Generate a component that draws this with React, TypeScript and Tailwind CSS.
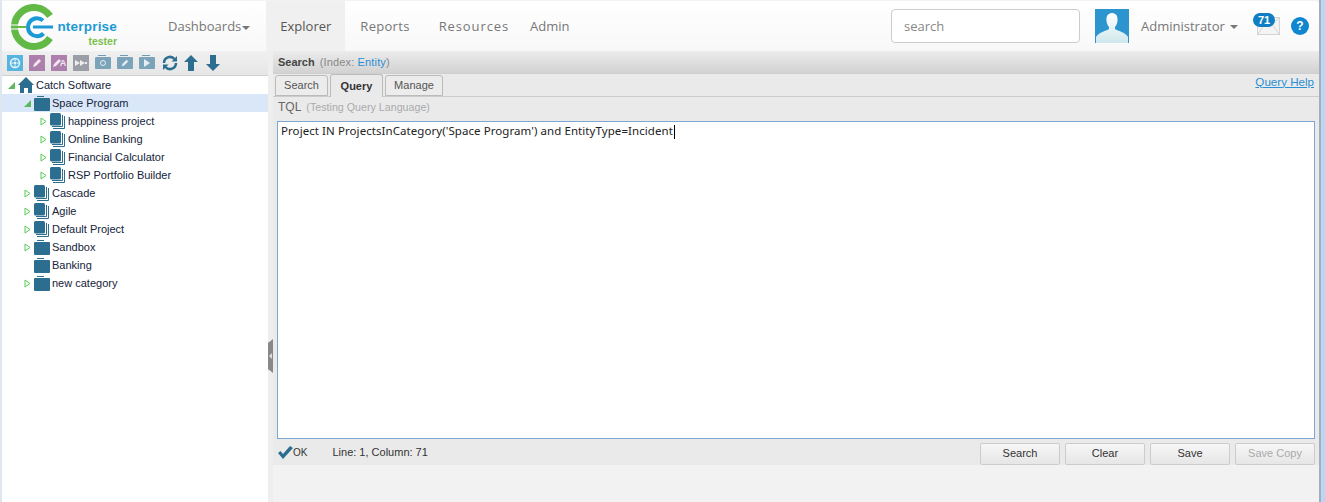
import React from "react";

const sans = "font-['Liberation_Sans',Arial,sans-serif]";
const nav = "font-['Open_Sans',sans-serif]";

function Logo() {
    return (
        <div className="ml-[9px] flex w-[143px] items-start">
            <svg width="46" height="46" viewBox="0 0 46 46" className="mt-[1px] shrink-0">
                <path d="M39 12 A19.5 19.5 0 1 0 39 34" fill="none" stroke="#63b946" strokeWidth="7" />
                <path d="M0 21 H10 M0 25 H10" stroke="#ffffff" strokeWidth="1.2" />
                <path d="M5 23 H15" stroke="#63b946" strokeWidth="2" />
                <path d="M32 16.5 A9 9 0 1 0 32.5 29.5" fill="none" stroke="#1b9ad6" strokeWidth="4" />
                <path d="M22 23 H42" stroke="#1b9ad6" strokeWidth="3" />
            </svg>
            <div className={`${sans} mt-[16px] flex w-[60px] flex-col items-end font-bold`}>
                <div className="whitespace-nowrap text-[13.5px] leading-[16px] tracking-[0.2px] text-[#1b9ad6]">nterprise</div>
                <div className="text-[10.5px] leading-[12px] text-[#7cc04b]">tester</div>
            </div>
        </div>
    );
}

function NavItem({ label, active, caret, className }: { label: string; active?: boolean; caret?: boolean; className: string }) {
    return (
        <div className={`flex h-full items-center pt-[2px] text-[13px] ${className} ${active ? "bg-[#f0f0f0] text-[#555]" : "text-[#777]"}`}>
            {label}
            {caret ? <span className="ml-[1px] mt-[2px] h-0 w-0 border-x-[4px] border-t-[4px] border-x-transparent border-t-[#777]" /> : null}
        </div>
    );
}

function Header() {
    return (
        <div className={`${nav} flex h-[50px] shrink-0 items-center rounded-tr-[4px] bg-gradient-to-b from-white to-[#f8f8f8]`}>
            <Logo />
            <div className="flex h-full items-center">
                <NavItem label="Dashboards" caret className="pl-[14px] pr-[16px]" />
                <NavItem label="Explorer" active className="px-[14px]" />
                <NavItem label="Reports" className="pl-[15px] pr-[14px] tracking-[0.3px]" />
                <NavItem label="Resources" className="pl-[15px] pr-[7px] tracking-[0.9px]" />
                <NavItem label="Admin" className="px-[14px]" />
            </div>
            <div className="ml-auto flex items-center">
                <div className="flex h-[34px] w-[189px] items-center rounded-[4px] border border-[#ccc] bg-white px-3 pt-[2px] text-[13px] text-[#888]">search</div>
                <svg width="34" height="34" viewBox="0 0 34 34" className="ml-[15px]">
                    <defs>
                        <linearGradient id="bust" x1="0" y1="0" x2="0" y2="1">
                            <stop offset="0" stopColor="#ffffff" />
                            <stop offset="1" stopColor="#cfe8ec" />
                        </linearGradient>
                    </defs>
                    <rect width="34" height="34" fill="#2c94cf" />
                    <path d="M17 4 C12.5 4 11 8 11.5 12 C11.8 15 13 17 14 18 V20 C11 22 4 23 1 28 V34 H33 V28 C30 23 23 22 20 20 V18 C21 17 22.2 15 22.5 12 C23 8 21.5 4 17 4 Z" fill="url(#bust)" />
                </svg>
                <span className="ml-[12px] mt-[2px] w-[82px] whitespace-nowrap text-[13px] text-[#777]">Administrator</span>
                <span className="ml-[7px] mt-[2px] h-0 w-0 border-x-[4px] border-t-[4px] border-x-transparent border-t-[#777]" />
                <div className="relative ml-[19px] h-[18px] w-[23px]">
                    <svg width="23" height="18" viewBox="0 0 23 18">
                        <rect x="0.5" y="0.5" width="22" height="17" fill="#f4f4f4" stroke="#d4d4d4" />
                        <path d="M1 1 L11.5 10 L22 1 M1 17 L8 7 M22 17 L15 7" fill="none" stroke="#d4d4d4" />
                    </svg>
                    <span className={`${sans} absolute -left-[4px] -top-[4px] flex h-[14px] w-[22px] items-center justify-center rounded-full bg-[#0f7fc4] text-[11px] font-bold text-white`}>71</span>
                </div>
                <span className={`${sans} ml-[11px] mr-[10px] flex h-[18px] w-[18px] items-center justify-center rounded-full bg-[#0f86d0] text-[12px] font-bold text-white`}>?</span>
            </div>
        </div>
    );
}

function ToolButton({ color, children }: { color: string; children: React.ReactNode }) {
    return <div className={`flex h-[16px] w-[16px] items-center justify-center ${color}`}>{children}</div>;
}

function Pencil() {
    return (
        <svg width="10" height="10" viewBox="0 0 10 10">
            <path d="M1 9 L2 6 L7 1 L9 3 L4 8 Z" fill="#f3e6f1" />
        </svg>
    );
}

function FolderTool({ children }: { children: React.ReactNode }) {
    return (
        <div className="flex h-[16px] w-[16px] flex-col">
            <div className="ml-[3px] h-[1px] w-[8px] bg-[#6f9bb3]" />
            <div className="mt-[1px] flex h-[12px] w-[16px] items-center justify-center rounded-[1px] bg-[#7ba3ba]">{children}</div>
        </div>
    );
}

function Toolbar() {
    return (
        <div className="flex h-[25px] shrink-0 items-center gap-[6px] border-b border-[#cfcfcf] bg-gradient-to-b from-[#f0f0f0] to-[#e6e6e6] pl-[5px]">
            <ToolButton color="bg-[#55b4e0]">
                <svg width="12" height="12" viewBox="0 0 12 12">
                    <circle cx="6" cy="6" r="4.5" fill="none" stroke="#e8f4fa" strokeWidth="1.5" />
                    <circle cx="6" cy="6" r="1.6" fill="#e8f4fa" />
                    <path d="M6 1 V4 M6 8 V11 M1 6 H4 M8 6 H11" stroke="#e8f4fa" />
                </svg>
            </ToolButton>
            <ToolButton color="bg-[#ad7fac]"><Pencil /></ToolButton>
            <ToolButton color="bg-[#ad7fac]">
                <Pencil />
                <span className={`${sans} -ml-[2px] text-[9px] font-bold leading-none text-[#f3e6f1]`}>A</span>
            </ToolButton>
            <ToolButton color="bg-[#9b9ea6]">
                <svg width="12" height="8" viewBox="0 0 12 8">
                    <path d="M0 1 L5 4 L0 7 Z M5 1 L10 4 L5 7 Z M10 3 H12 V5 H10 Z" fill="#eeeeee" />
                </svg>
            </ToolButton>
            <FolderTool>
                <span className="h-[6px] w-[6px] rounded-full border border-[#e6eef3]" />
            </FolderTool>
            <FolderTool>
                <svg width="8" height="8" viewBox="0 0 10 10"><path d="M1 9 L2 6 L7 1 L9 3 L4 8 Z" fill="#e6eef3" /></svg>
            </FolderTool>
            <FolderTool>
                <span className="h-0 w-0 border-y-[4px] border-l-[6px] border-y-transparent border-l-[#e6eef3]" />
            </FolderTool>
            <svg width="16" height="16" viewBox="0 0 16 16" className="ml-[1px]">
                <path d="M2 8 A6 6 0 0 1 12.5 4" fill="none" stroke="#2b6e90" strokeWidth="2.5" />
                <path d="M14 8 A6 6 0 0 1 3.5 12" fill="none" stroke="#2b6e90" strokeWidth="2.5" />
                <path d="M15 1 V6.5 H9.5 Z M1 15 V9.5 H6.5 Z" fill="#2b6e90" />
            </svg>
            <svg width="14" height="16" viewBox="0 0 14 16">
                <path d="M7 0 L14 7 H10 V16 H4 V7 H0 Z" fill="#2b6e90" />
            </svg>
            <svg width="14" height="16" viewBox="0 0 14 16" className="ml-[2px]">
                <path d="M7 16 L14 9 H10 V0 H4 V9 H0 Z" fill="#2b6e90" />
            </svg>
        </div>
    );
}

function Expander({ open }: { open?: boolean }) {
    if (open) {
        return (
            <svg width="7" height="7" viewBox="0 0 7 7">
                <path d="M0 7 L7 7 L7 0 Z" fill="#5cb85c" />
            </svg>
        );
    }
    return (
        <svg width="7" height="9" viewBox="0 0 7 9">
            <path d="M1 1 L6 4.5 L1 8 Z" fill="#ffffff" stroke="#55cc55" />
        </svg>
    );
}

function Folder() {
    return (
        <svg width="16" height="15" viewBox="0 0 16 15">
            <path d="M3 0.5 H10" stroke="#2b6e90" />
            <rect y="2" width="16" height="13" rx="1" fill="#2b6e90" />
        </svg>
    );
}

function Stack() {
    return (
        <svg width="15" height="16" viewBox="0 0 15 16">
            <path d="M14.5 3 V15.5 H3 M12.5 2 V13.5 H2" fill="none" stroke="#2b6e90" />
            <rect width="11" height="12.5" rx="1.5" fill="#2b6e90" />
        </svg>
    );
}

function Home() {
    return (
        <svg width="16" height="16" viewBox="0 0 16 16">
            <path d="M8 0 L16 8 H14 V16 H10 V11 H6 V16 H2 V8 H0 Z" fill="#2b6e90" />
        </svg>
    );
}

type TreeItem = { label: string; depth: number; kind: "home" | "folder" | "stack"; open?: boolean; leaf?: boolean; selected?: boolean };

const tree: TreeItem[] = [
    { label: "Catch Software", depth: 0, kind: "home", open: true },
    { label: "Space Program", depth: 1, kind: "folder", open: true, selected: true },
    { label: "happiness project", depth: 2, kind: "stack" },
    { label: "Online Banking", depth: 2, kind: "stack" },
    { label: "Financial Calculator", depth: 2, kind: "stack" },
    { label: "RSP Portfolio Builder", depth: 2, kind: "stack" },
    { label: "Cascade", depth: 1, kind: "stack" },
    { label: "Agile", depth: 1, kind: "stack" },
    { label: "Default Project", depth: 1, kind: "stack" },
    { label: "Sandbox", depth: 1, kind: "folder" },
    { label: "Banking", depth: 1, kind: "folder", leaf: true },
    { label: "new category", depth: 1, kind: "folder" },
];

const indents = ["pl-[6px]", "pl-[22px]", "pl-[38px]"];

function Tree() {
    return (
        <div className={`${sans} flex-1 bg-white text-[11px] text-[#14233a]`}>
            {tree.map((item, index) => (
                <div key={index} className={`flex h-[18px] items-center ${indents[item.depth]} ${item.selected ? "bg-[#d9e7f8]" : ""}`}>
                    <span className="flex w-[10px] shrink-0 items-center">{item.leaf ? null : <Expander open={item.open} />}</span>
                    <span className="flex w-[18px] shrink-0 items-center">
                        {item.kind === "home" ? <Home /> : item.kind === "folder" ? <Folder /> : <Stack />}
                    </span>
                    <span className="whitespace-nowrap">{item.label}</span>
                </div>
            ))}
        </div>
    );
}

function Tab({ label, width, active }: { label: string; width: string; active?: boolean }) {
    return (
        <div
            className={`flex items-center justify-center rounded-t-[3px] border border-[#bbb] text-[11px] ${width} ${
                active ? "z-10 -mb-[1px] h-[23px] border-b-0 bg-[#eaeaea] font-bold text-[#333]" : "h-[21px] bg-[#ececec] text-[#555]"
            }`}
        >
            {label}
        </div>
    );
}

function ActionButton({ label, disabled }: { label: string; disabled?: boolean }) {
    return (
        <div
            className={`flex h-[22px] w-[80px] items-center justify-center rounded-[2px] border border-[#ccc] bg-gradient-to-b from-[#f6f6f6] to-[#e6e6e6] text-[11px] ${
                disabled ? "text-[#aaa]" : "text-[#333]"
            }`}
        >
            {label}
        </div>
    );
}

function Main() {
    return (
        <div className={`${sans} flex min-w-0 flex-1 flex-col bg-[#f2f2f2]`}>
            <div className="flex h-[23px] shrink-0 items-center border-b border-[#cfcfcf] bg-gradient-to-b from-[#ececec] to-[#d2d2d2] pl-[5px] text-[11px] text-[#888]">
                <b className="text-[#444]">Search</b>
                <span className="ml-[5px] tracking-[0.15px]">(Index: <span className="text-[#2a8fd4]">Entity</span>)</span>
            </div>
            <div className="flex h-[23px] shrink-0 items-end gap-[2px] border-b border-[#ccc] bg-[#eaeaea] pl-[2px] pr-[5px]">
                <Tab label="Search" width="w-[53px]" />
                <Tab label="Query" width="w-[53px]" active />
                <Tab label="Manage" width="w-[58px]" />
                <span className="mb-[6px] ml-auto text-[11.6px] text-[#2a8fd4] underline">Query Help</span>
            </div>
            <div className="flex h-[24px] shrink-0 items-center bg-[#eaeaea] pb-[4px] pl-[5px]">
                <span className="text-[12px] text-[#666]">TQL</span>
                <span className="ml-[5px] text-[10.7px] text-[#aaa]">(Testing Query Language)</span>
            </div>
            <div className="flex h-[344px] shrink-0 flex-col bg-[#eaeaea] pl-[4px] pr-[4px]">
                <div className="h-[318px] shrink-0 border border-[#7da7d0] bg-white pl-[3px] pt-[1px] font-['Noto_Sans',sans-serif] text-[11.5px] leading-[16px] tracking-[0.07px] text-[#222]">
                    Project IN ProjectsInCategory('Space Program') and EntityType=Incident
                    <span className="ml-[1px] inline-block h-[14px] w-[1px] bg-black align-middle" />
                </div>
                <div className="flex h-[26px] shrink-0 items-center text-[11px] text-[#333]">
                    <svg width="16" height="14" viewBox="0 0 16 14">
                        <path d="M1 8 L3.5 6 L6 9 L13 1 L16 3 L6 14 Z" fill="#2b6e90" />
                    </svg>
                    <span className="text-[10px]">OK</span>
                    <span className="ml-[25px]">Line: 1, Column: 71</span>
                    <div className="ml-auto mt-[3px] flex gap-[5px]">
                        <ActionButton label="Search" />
                        <ActionButton label="Clear" />
                        <ActionButton label="Save" />
                        <ActionButton label="Save Copy" disabled />
                    </div>
                </div>
            </div>
        </div>
    );
}

function Splitter() {
    return (
        <div className="flex w-[5px] shrink-0 items-start bg-[#eeeeee] pt-[288px]">
            <div className="flex h-[34px] w-[5px] items-center justify-center bg-[#888] [clip-path:polygon(0_12%,100%_0,100%_100%,0_88%)]">
                <span className="h-0 w-0 border-y-[3px] border-r-[3px] border-y-transparent border-r-[#ddd]" />
            </div>
        </div>
    );
}

export default function App() {
    return (
        <div className="flex h-[502px] w-[1325px] overflow-hidden bg-[#b9d6f6]">
            <div className="w-[2px] shrink-0 bg-[#dfe6ee]" />
            <div className="flex w-[1319px] shrink-0 flex-col border-r-2 border-[#a3aebb] bg-[#f2f2f2] pt-[1px]">
                <Header />
                <div className="flex min-h-0 flex-1">
                    <div className="flex w-[266px] shrink-0 flex-col">
                        <Toolbar />
                        <Tree />
                    </div>
                    <Splitter />
                    <Main />
                </div>
            </div>
        </div>
    );
}
